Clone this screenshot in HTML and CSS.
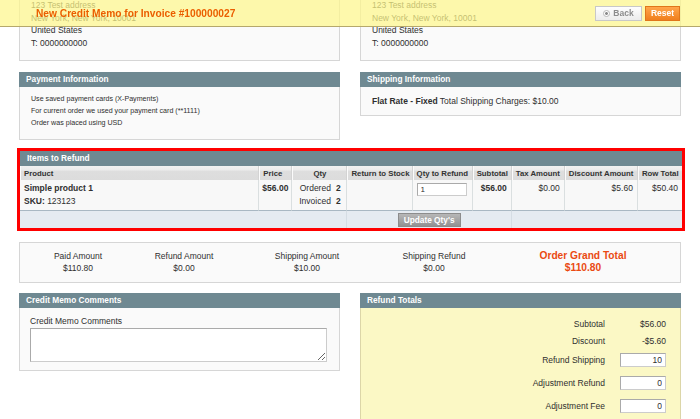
FILE: index.html
```html
<!DOCTYPE html>
<html lang="en">
<head>
<meta charset="utf-8">
<title>New Credit Memo</title>
<link rel="stylesheet" href="styles.css">
</head>
<body>
<div class="float-head">
  <h3 class="title">New Credit Memo for Invoice #100000027</h3>
  <div class="actions">
    <button class="btn btn-back"><span class="back-ico"></span>Back</button>
    <button class="btn btn-reset">Reset</button>
  </div>
</div>

<div class="page">
  <div class="cols">
    <div class="box addr">
      <div>123 Test address</div>
      <div>New York, New York, 10001</div>
      <div>United States</div>
      <div>T: 0000000000</div>
    </div>
    <div class="box addr">
      <div>123 Test address</div>
      <div>New York, New York, 10001</div>
      <div>United States</div>
      <div>T: 0000000000</div>
    </div>
  </div>

  <div class="cols info-row">
    <section>
      <div class="sec-head">Payment Information</div>
      <div class="box info pay">
        <div>Use saved payment cards (X-Payments)</div>
        <div>For current order we used your payment card (**1111)</div>
        <div>Order was placed using USD</div>
      </div>
    </section>
    <section>
      <div class="sec-head">Shipping Information</div>
      <div class="box info">
        <div><b>Flat Rate - Fixed</b> Total Shipping Charges: $10.00</div>
      </div>
    </section>
  </div>

  <section class="items">
    <div class="sec-head">Items to Refund</div>
    <table class="grid">
      <colgroup>
        <col class="c-product"><col class="c-price"><col class="c-qty"><col class="c-stock"><col class="c-refund"><col class="c-sub"><col class="c-tax"><col class="c-disc"><col class="c-total">
      </colgroup>
      <thead>
        <tr>
          <th>Product</th>
          <th>Price</th>
          <th class="center">Qty</th>
          <th>Return to Stock</th>
          <th>Qty to Refund</th>
          <th>Subtotal</th>
          <th>Tax Amount</th>
          <th>Discount Amount</th>
          <th>Row Total</th>
        </tr>
      </thead>
      <tbody>
        <tr>
          <td><b>Simple product 1</b><br><b>SKU:</b> 123123</td>
          <td><b>$56.00</b></td>
          <td>
            <div class="qty-list">
              <span>Ordered</span><b>2</b>
              <span>Invoiced</span><b>2</b>
            </div>
          </td>
          <td></td>
          <td><input class="qty-input" type="text" value="1"></td>
          <td class="num"><b>$56.00</b></td>
          <td class="num">$0.00</td>
          <td class="num">$5.60</td>
          <td class="num last">$50.40</td>
        </tr>
      </tbody>
      <tfoot>
        <tr>
          <td colspan="3"></td>
          <td colspan="3" class="center"><button class="btn-update">Update Qty's</button></td>
          <td colspan="3" class="last"></td>
        </tr>
      </tfoot>
    </table>
  </section>

  <div class="box summary">
    <div class="sum-cell"><div>Paid Amount</div><div>$110.80</div></div>
    <div class="sum-cell"><div>Refund Amount</div><div>$0.00</div></div>
    <div class="sum-cell"><div>Shipping Amount</div><div>$10.00</div></div>
    <div class="sum-cell"><div>Shipping Refund</div><div>$0.00</div></div>
    <div class="sum-cell grand"><div>Order Grand Total</div><div>$110.80</div></div>
  </div>

  <div class="cols bottom-row">
    <section>
      <div class="sec-head">Credit Memo Comments</div>
      <div class="box comments">
        <label class="c-label" for="cm">Credit Memo Comments</label>
        <textarea id="cm" class="c-area"></textarea>
      </div>
    </section>
    <section>
      <div class="sec-head">Refund Totals</div>
      <div class="box totals">
        <div class="t-row"><span>Subtotal</span><span class="t-val">$56.00</span></div>
        <div class="t-row"><span>Discount</span><span class="t-val">-$5.60</span></div>
        <div class="t-row t-input"><span>Refund Shipping</span><input class="t-field" type="text" value="10"></div>
        <div class="t-row t-input"><span>Adjustment Refund</span><input class="t-field" type="text" value="0"></div>
        <div class="t-row t-input"><span>Adjustment Fee</span><input class="t-field" type="text" value="0"></div>
      </div>
    </section>
  </div>
</div>
</body>
</html>
```

FILE: styles.css
```css
* { box-sizing: border-box; }
html, body { margin: 0; padding: 0; }
body {
  font-family: "Liberation Sans", Arial, sans-serif;
  font-size: 8.5px;
  line-height: 12.5px;
  color: #2f2f2f;
  background: #fff;
  overflow: hidden;
  height: 419px;
}

/* floating header */
.float-head {
  position: fixed;
  top: 0; left: 0; right: 0;
  height: 27px;
  background: rgba(254, 247, 140, 0.72);
  border-bottom: 1px solid #b5a86c;
  display: flex;
  align-items: center;
  justify-content: space-between;
  padding: 0 20px 0 36px;
  z-index: 10;
}
.title {
  margin: 2px 0 0;
  font-size: 10.2px;
  font-weight: bold;
  color: #eb5e00;
}
.actions { display: flex; gap: 3px; }
.btn {
  height: 15px;
  padding: 0;
  font-family: "Liberation Sans", Arial, sans-serif;
  font-size: 8.5px;
  font-weight: bold;
  line-height: 13px;
  border-radius: 0;
  display: flex;
  align-items: center;
  justify-content: center;
}
.btn-back {
  width: 47px;
  color: #8c8c8c;
  background: linear-gradient(#fefefe, #ececec);
  border: 1px solid #c8c8c8;
  gap: 3px;
}
.back-ico {
  width: 7px; height: 7px;
  border-radius: 50%;
  border: 1px solid #b9b9b9;
  background: radial-gradient(circle, #8a8a8a 0 1.2px, #fff 1.6px);
}
.btn-reset {
  width: 35px;
  color: #fff;
  background: linear-gradient(#ffa64a, #f07f1e);
  border: 1px solid #e0761a;
}

/* page */
.page { padding: 0 18px 0 19px; margin-top: -10px; }
.cols {
  display: grid;
  grid-template-columns: 321px 321px;
  column-gap: 20px;
  align-items: start;
}
.box { background: #fafafa; border: 1px solid #d6d6d6; }
.addr { padding: 8px 11px 11px; }

.info-row { margin-top: 11px; }
.sec-head {
  height: 15px;
  line-height: 15px;
  padding: 0 7px;
  background: #6f8992;
  color: #fff;
  font-weight: bold;
  font-size: 8.3px;
}
.info { border-top: 0; padding: 8px 11px 7px; }
.info.pay {
  font-size: 7.1px;
  line-height: 11.7px;
  padding: 7.2px 11px 9.3px;
}

/* items */
.items {
  margin-top: 10px;
  margin-right: -1px;
  border: 1px solid #d6d6d6;
  outline: 3px solid #f00;
  outline-offset: -1px;
}
.grid {
  width: 100%;
  border-collapse: separate;
  border-spacing: 0;
  table-layout: fixed;
}
.c-product { width: 239px; }
.c-price { width: 33px; }
.c-qty { width: 55px; }
.c-stock { width: 65px; }
.c-refund { width: 60px; }
.c-sub { width: 39px; }
.c-tax { width: 53px; }
.c-disc { width: 73px; }
.c-total { width: 44px; }

.grid th {
  height: 14px;
  padding: 1px 3px 0 4px;
  text-align: left;
  font-size: 7.8px;
  font-weight: bold;
  color: #333;
  white-space: nowrap;
  overflow: hidden;
  line-height: 13px;
  background: linear-gradient(#f1f1f1 0, #ebebeb 30%, #dedede 35%, #dcdcdc 100%);
  border-right: 1px solid #d3d3d3;
  box-shadow: inset 1px 0 #fbfbfb;
}
.grid th:last-child { border-right: 0; }
.grid th.center, .grid td.center { text-align: center; }

.grid tbody td {
  height: 30px;
  padding: 2px 4px;
  vertical-align: top;
  line-height: 13px;
  background: #f8f8f8;
  border-right: 1px solid #dadfe0;
  border-bottom: 1px solid #a9b8c3;
  white-space: nowrap;
}
.grid tbody td:nth-child(2) { padding-left: 3px; }
.grid td.num { text-align: right; }
.grid td.last { border-right: 0; }

.qty-list {
  display: grid;
  grid-template-columns: auto auto;
  column-gap: 5px;
  justify-content: center;
  justify-items: end;
  padding-left: 1px;
}
.qty-input {
  display: block;
  width: 50px;
  height: 13px;
  margin-top: 1px;
  padding: 0 3px;
  font-family: "Liberation Sans", Arial, sans-serif;
  font-size: 8px;
  border: 1px solid #aaa;
  border-right-color: #ccc;
  border-bottom-color: #ccc;
  background: #fff;
  color: #2f2f2f;
}

.grid tfoot td {
  height: 17px;
  padding: 2px 0 0;
  background: #e5ebf1;
  border-right: 1px solid #d5dde4;
  vertical-align: top;
}
.btn-update {
  width: 63px;
  height: 14px;
  padding: 0;
  font-family: "Liberation Sans", Arial, sans-serif;
  font-size: 8.3px;
  font-weight: bold;
  color: #fff;
  background: linear-gradient(#b7b7b7, #929292);
  border: 1px solid #8c8c8c;
  border-radius: 0;
}

/* summary */
.summary {
  margin-top: 13px;
  margin-right: 1px;
  padding: 7px 0;
  display: grid;
  grid-template-columns: 116px 96px 150px 104px 194px;
  text-align: center;
}
.grand { color: #ea4a12; font-weight: bold; font-size: 10.2px; }

/* bottom */
.bottom-row { margin-top: 10px; }
.comments { border-top: 0; padding: 7px 12px 8px 10px; }
.c-label { display: block; }
.c-area {
  display: block;
  width: 297px;
  height: 34px;
  margin: 0.5px 0 0;
  border: 1px solid #aaa;
  border-right-color: #ccc;
  border-bottom-color: #ccc;
  background: #fff;
  resize: both;
}
.totals {
  border-top: 0;
  border-color: #dcd6a8;
  background: #fbf8c5;
  padding: 8px 14px 40px 0;
}
.t-row {
  display: grid;
  grid-template-columns: 1fr 46px;
  column-gap: 15px;
  align-items: center;
  text-align: right;
  padding: 2.4px 0;
}
.t-input { padding: 2.7px 0 6.3px; }
.t-field {
  display: block;
  width: 46px;
  height: 14px;
  padding: 0 3px;
  text-align: right;
  font-family: "Liberation Sans", Arial, sans-serif;
  font-size: 8.5px;
  color: #2f2f2f;
  border: 1px solid #aaa;
  border-right-color: #ccc;
  border-bottom-color: #ccc;
  background: #fff;
}
```
